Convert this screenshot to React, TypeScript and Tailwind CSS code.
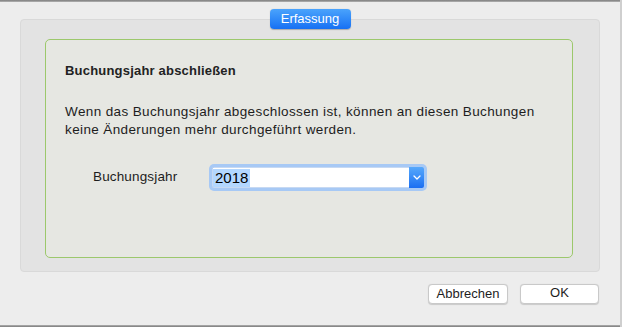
export default function App() {
  return (
    <div className="relative flex h-[327px] w-[622px] flex-col overflow-hidden border-r-2 border-r-[#cfcfcf] bg-[#ededed] font-['Liberation_Sans',Arial,sans-serif] text-[13px] text-[#1d1d1d]">
      <div className="h-[2px] bg-gradient-to-b from-[#7c7c7c] to-[#b4b4b4]" />

      <div className="flex flex-1 flex-col pl-[20px] pr-[20px] pt-[7px]">
        <div className="relative z-10 flex justify-center">
          <div className="flex h-[20px] w-[81px] items-center justify-center rounded-[4px] bg-gradient-to-b from-[#4aa3fc] to-[#1670f3] text-[13px] text-white shadow-[0_0.5px_1px_rgba(0,0,0,0.25)]">
            Erfassung
          </div>
        </div>

        <div className="-mt-[10px] flex h-[253px] flex-col rounded-[4px] border border-[#d9d9d9] bg-[#e3e3e3] pb-[13px] pl-[24px] pr-[26px] pt-[19px]">
          <div className="flex flex-1 flex-col rounded-[5px] border border-[#9cc86c] bg-[#e6e7e2] pl-[19px] pt-[23px]">
            <h1 className="text-[13px] font-bold leading-[16px] tracking-[0.2px] text-[#222]">Buchungsjahr abschließen</h1>
            <p className="mt-[24px] text-[13.5px] leading-[18px] tracking-[0.38px]">
              Wenn das Buchungsjahr abgeschlossen ist, können an diesen Buchungen
              <br />
              keine Änderungen mehr durchgeführt werden.
            </p>

            <div className="ml-[28px] mt-[25px] flex items-center">
              <span className="w-[116px] text-[13.5px] tracking-[0.15px]">Buchungsjahr</span>
              <div className="flex h-[27px] w-[218px] rounded-[5px] bg-[#a7c9f5] p-[3px]">
                <div className="flex flex-1 items-center rounded-[2px] bg-white pl-[1px] shadow-[inset_0_0_0_0.5px_#8fb3e6]">
                  <span className="bg-[#b3d7ff] px-[2px] text-[15px] leading-[18px] text-black">2018</span>
                  <div className="ml-auto flex h-full w-[15px] items-center justify-center rounded-r-[2px] bg-gradient-to-b from-[#56a8fb] to-[#1a6ef2]">
                    <svg width="8" height="5" viewBox="0 0 8 5" fill="none">
                      <path d="M1 1l3 3 3-3" stroke="white" strokeWidth="1.3" strokeLinecap="round" strokeLinejoin="round" />
                    </svg>
                  </div>
                </div>
              </div>
            </div>
          </div>
        </div>

        <div className="mt-[12px] flex justify-end gap-[12px] pr-[1px]">
          <button className="h-[20px] w-[80px] rounded-[4px] border border-[#c9c9c9] bg-white text-[13px] leading-[18px] text-[#1d1d1d] shadow-[0_0.5px_1px_rgba(0,0,0,0.15)]">
            Abbrechen
          </button>
          <button className="h-[20px] w-[79px] rounded-[4px] border border-[#c9c9c9] bg-white pb-[3px] text-[13px] leading-[14px] text-[#1d1d1d] shadow-[0_0.5px_1px_rgba(0,0,0,0.15)]">
            OK
          </button>
        </div>
      </div>

      <div className="h-[2px] bg-gradient-to-b from-[#b0b0b0] to-[#7c7c7c]" />
    </div>
  );
}
